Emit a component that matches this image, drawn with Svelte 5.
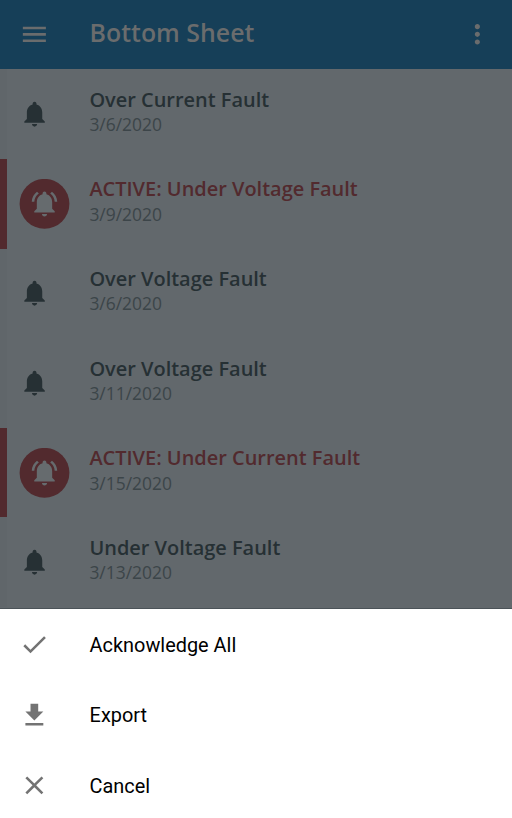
<script>
  const faults = [
    { title: 'Over Current Fault', date: '3/6/2020' },
    { title: 'ACTIVE: Under Voltage Fault', date: '3/9/2020', active: true },
    { title: 'Over Voltage Fault', date: '3/6/2020' },
    { title: 'Over Voltage Fault', date: '3/11/2020' },
    { title: 'ACTIVE: Under Current Fault', date: '3/15/2020', active: true },
    { title: 'Under Voltage Fault', date: '3/13/2020' }
  ];
  const bell =
    'M12 22c1.1 0 2-.9 2-2h-4c0 1.1.89 2 2 2zm6-6v-5c0-3.07-1.64-5.64-4.5-6.32V4c0-.83-.67-1.5-1.5-1.5s-1.5.67-1.5 1.5v.68C7.63 5.36 6 7.92 6 11v5l-2 2v1h16v-1l-2-2z';
  const waves =
    'M7.58 4.08L6.15 2.65C3.75 4.48 2.17 7.3 2.03 10.5h2c.15-2.65 1.51-4.97 3.55-6.42zm12.39 6.42h2c-.15-3.2-1.73-6.02-4.12-7.85l-1.42 1.43c2.02 1.45 3.39 3.77 3.54 6.42z';
  const actions = [
    { label: 'Acknowledge All', path: 'M9 16.17L4.83 12l-1.42 1.41L9 19 21 7l-1.41-1.41z' },
    { label: 'Export', path: 'M19 9h-4V3H9v6H5l7 7 7-7zM5 18v2h14v-2H5z' },
    {
      label: 'Cancel',
      path: 'M19 6.41L17.59 5 12 10.59 6.41 5 5 6.41 10.59 12 5 17.59 6.41 19 12 13.41 17.59 19 19 17.59 13.41 12z'
    }
  ];
</script>

<div class="screen">
  <header>
    <svg class="icon" viewBox="0 0 24 24"><path d="M3 18h18v-2H3v2zm0-5h18v-2H3v2zm0-7v2h18V6H3z" /></svg>
    <h1>Bottom Sheet</h1>
    <svg class="icon" viewBox="0 0 24 24">
      <path d="M12 8c1.1 0 2-.9 2-2s-.9-2-2-2-2 .9-2 2 .9 2 2 2zm0 2c-1.1 0-2 .9-2 2s.9 2 2 2 2-.9 2-2-.9-2-2-2zm0 6c-1.1 0-2 .9-2 2s.9 2 2 2 2-.9 2-2-.9-2-2-2z" />
    </svg>
  </header>

  <main>
    {#each faults as fault}
      <div class="row" class:active={fault.active}>
        <svg class="badge" viewBox="0 0 51 50">
          {#if fault.active}
            <circle cx="25.5" cy="24.8" r="24.9" />
            <g class="ringing" transform="translate(10.14 9.3) scale(1.28)">
              <path d={bell} />
              <path d={waves} />
            </g>
          {:else}
            <path d={bell} transform="translate(0.2 9.5) scale(1.28)" />
          {/if}
        </svg>
        <div class="text">
          <div class="title">{fault.title}</div>
          <div class="date">{fault.date}</div>
        </div>
      </div>
    {/each}
  </main>

  <section class="sheet">
    {#each actions as action}
      <div class="action">
        <svg class="icon" viewBox="0 0 24 24"><path d={action.path} /></svg>
        <span>{action.label}</span>
      </div>
    {/each}
  </section>
</div>

<style>
  :global(body) {
    margin: 0;
  }
  .screen {
    width: 512px;
    height: 818px;
    overflow: hidden;
    display: flex;
    flex-direction: column;
    background: #62686c;
    font-family: 'Open Sans', sans-serif;
  }
  .icon {
    width: 30.72px;
    height: 30.72px;
    flex: none;
    fill: currentColor;
    display: block;
  }
  header {
    box-sizing: border-box;
    height: 69.4px;
    flex: none;
    display: flex;
    align-items: center;
    padding: 0 19.2px;
    background: #163f58;
    color: #6a6c6d;
  }
  h1 {
    margin: 0 auto 5.4px 39.7px;
    font-size: 24.9px;
    font-weight: 600;
    line-height: 36px;
    white-space: nowrap;
  }
  main {
    height: 539.4px;
    flex: none;
    box-sizing: border-box;
    overflow: hidden;
    border-bottom: 1px solid #4b5358;
  }
  .row {
    box-sizing: border-box;
    height: 89.6px;
    display: flex;
    align-items: center;
    border-left: 7px solid #60666a;
    color: #263034;
  }
  .row.active {
    border-left-color: #522a2e;
    color: #522a2e;
  }
  .badge {
    display: block;
    flex: none;
    width: 51px;
    height: 50px;
    margin-left: 12px;
    fill: currentColor;
  }
  .ringing {
    fill: #666b6e;
  }
  .text {
    padding: 0 0 5.4px 19.4px;
    white-space: nowrap;
  }
  .title {
    font-size: 19.97px;
    font-weight: 600;
    line-height: 26px;
  }
  .date {
    font-size: 17.45px;
    line-height: 24px;
    margin-top: -0.6px;
    color: #3c4549;
  }
  .sheet {
    flex: 1;
    background: #fff;
    font-family: Roboto, sans-serif;
  }
  .action {
    height: 70.4px;
    box-sizing: border-box;
    padding: 1px 19.2px 0;
    display: flex;
    align-items: center;
    gap: 39.7px;
    color: #737373;
  }
  .action span {
    font-size: 19.9px;
    line-height: 24px;
    color: #000;
    padding-top: 2.8px;
  }
</style>
